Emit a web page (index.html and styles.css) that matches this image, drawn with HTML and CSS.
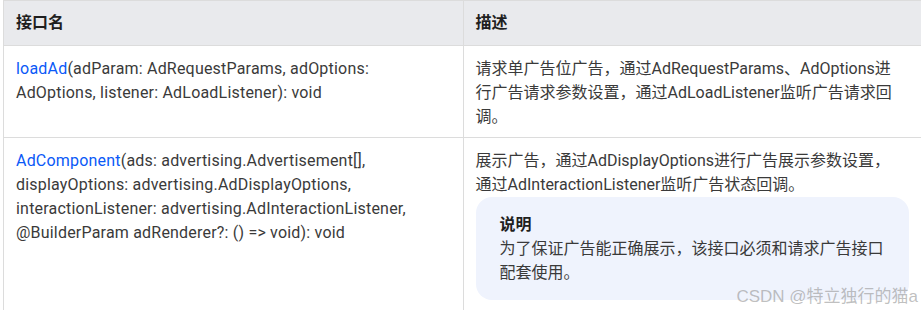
FILE: index.html
```html
<!DOCTYPE html>
<html lang="zh-CN">
<head>
<meta charset="utf-8">
<title>接口说明</title>
<link rel="stylesheet" href="styles.css">
</head>
<body>
<div class="page">
  <table class="api-table">
    <thead>
      <tr>
        <th class="col-name">接口名</th>
        <th class="col-desc">描述</th>
      </tr>
    </thead>
    <tbody>
      <tr>
        <td class="sig"><a class="api-link" href="#">loadAd</a>(adParam: AdRequestParams, adOptions:<br>AdOptions, listener: AdLoadListener): void</td>
        <td>请求单广告位广告，通过AdRequestParams、AdOptions进<br>行广告请求参数设置，通过AdLoadListener监听广告请求回<br>调。</td>
      </tr>
      <tr>
        <td class="sig"><a class="api-link" href="#">AdComponent</a>(ads: advertising.Advertisement[],<br>displayOptions: advertising.AdDisplayOptions,<br>interactionListener: advertising.AdInteractionListener,<br>@BuilderParam adRenderer?: () =&gt; void): void</td>
        <td>
          <div>展示广告，通过AdDisplayOptions进行广告展示参数设置，<br>通过AdInteractionListener监听广告状态回调。</div>
          <div class="note">
            <div class="note-title">说明</div>
            <div class="note-body">为了保证广告能正确展示，该接口必须和请求广告接口配套使用。</div>
          </div>
        </td>
      </tr>
    </tbody>
  </table>
  <div class="watermark">CSDN @特立独行的猫a</div>
</div>
</body>
</html>
```
FILE: styles.css
```css
html, body {
  margin: 0;
  padding: 0;
  background: #ffffff;
}
body {
  font-family: "Roboto", "Noto Sans CJK SC", sans-serif;
  font-size: 16px;
  line-height: 24px;
  color: #3a3a3a;
  overflow: hidden;
}
.page {
  position: relative;
  width: 921px;
  height: 310px;
  overflow: hidden;
  padding-left: 3px;
  box-sizing: border-box;
}
.api-table {
  border-collapse: collapse;
  width: 920px;
  table-layout: fixed;
}
.api-table th,
.api-table td {
  border: 1px solid #dcdcdc;
  text-align: left;
  vertical-align: top;
}
.api-table th {
  background: #e9eaed;
  font-weight: 700;
  color: #1f1f1f;
  padding: 10px 12px;
}
.api-table td {
  padding: 11px 12px 8px;
}
.api-table td.sig {
  letter-spacing: 0.2px;
}
.col-name,
.col-desc {
  width: 50%;
}
.api-link {
  color: #0a59f7;
  text-decoration: none;
}
.note {
  background: #eff3fd;
  border-radius: 16px;
  padding: 16px 24px 15px;
  margin-right: 1px;
  margin-bottom: 12px;
}
.note-title {
  font-weight: 700;
  color: #1f1f1f;
}
.watermark {
  position: absolute;
  right: 3px;
  bottom: 3px;
  font-family: "Liberation Sans", "Noto Sans CJK SC", sans-serif;
  font-size: 17px;
  line-height: 20px;
  color: rgba(150, 150, 150, 0.6);
}
```
